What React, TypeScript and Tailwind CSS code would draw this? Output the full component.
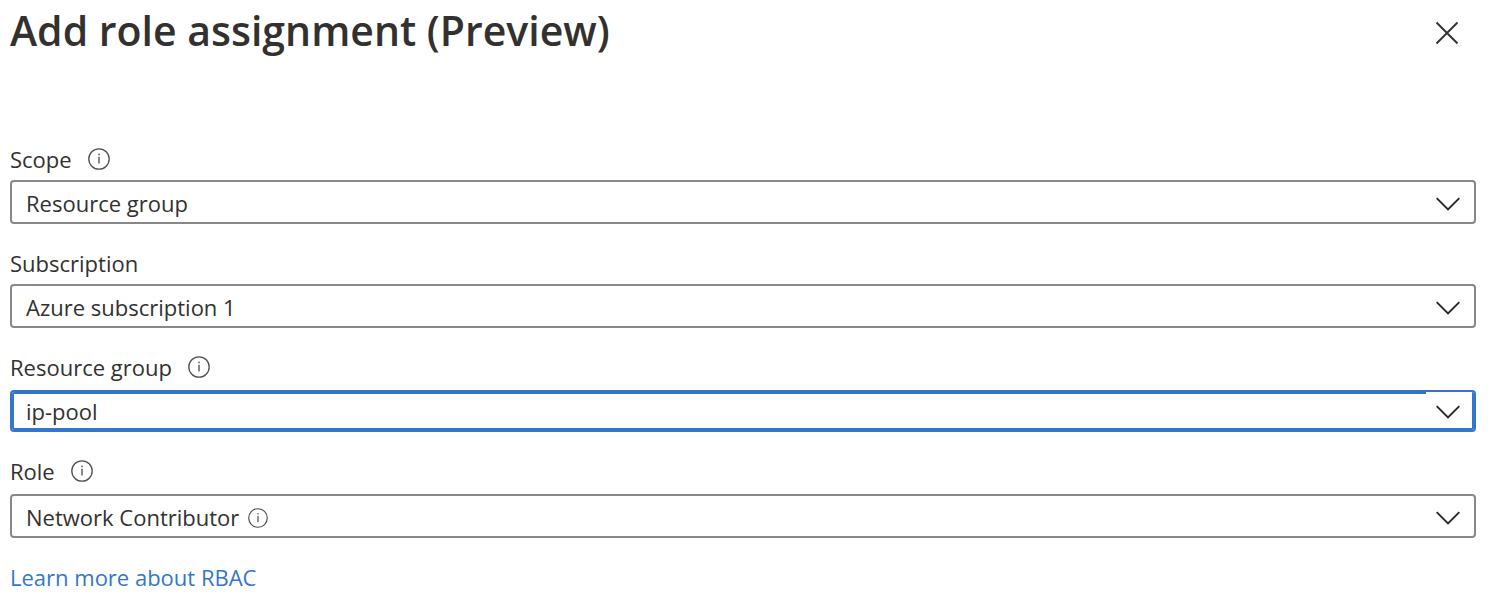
import { useState } from "react";
import type { ReactNode } from "react";
import { clsx } from "clsx";

function InfoIcon({ className }: { className: string }) {
  return (
    <svg viewBox="0 0 22 22" fill="none" className={className} aria-hidden="true">
      <circle cx="11" cy="11" r="10.2" stroke="#505050" strokeWidth="1.3" />
      <circle cx="11" cy="6.4" r="0.9" fill="#606060" />
      <path d="M11 8.8V15.6" stroke="#606060" strokeWidth="1.5" />
    </svg>
  );
}

function ChevronIcon() {
  return (
    <svg viewBox="0 0 24 14" fill="none" className="h-3.5 w-6" aria-hidden="true">
      <path d="M0.7 1.2L12 12.4L23.3 1.2" stroke="#292827" strokeWidth="1.9" />
    </svg>
  );
}

type FieldProps = {
  id: string;
  label: string;
  options: string[];
  info?: boolean;
  active?: boolean;
  spaced?: boolean;
  adornment?: ReactNode;
};

function Field({ id, label, options, info, active, spaced, adornment }: FieldProps) {
  const [value, setValue] = useState(options[0]);
  return (
    <div className={clsx("flex flex-col", spaced && "gap-0.5")}>
      <div className="flex h-8 items-center gap-4 pb-2.5">
        <label htmlFor={id}>{label}</label>
        {info && (
          <button type="button" aria-label={`About ${label}`}>
            <InfoIcon className="size-[22px]" />
          </button>
        )}
      </div>
      <div className="relative">
        <select
          id={id}
          value={value}
          onChange={(e) => setValue(e.target.value)}
          className={clsx(
            "block w-full appearance-none rounded-[4px] border-2 bg-white pr-12 pl-3.5 outline-none",
            active
              ? "h-[42px] border-[#3277cd] shadow-[inset_0_0_0_2px_#3277cd]"
              : "h-11 border-[#8a8886] pt-0.5",
          )}
        >
          {options.map((option) => (
            <option key={option}>{option}</option>
          ))}
        </select>
        {adornment}
        <span
          className={clsx(
            "pointer-events-none absolute top-0.5 right-1 bottom-1 flex w-[46px] items-center justify-center bg-white pr-0.5",
            active ? "pt-1" : "pt-1.5",
          )}
        >
          <ChevronIcon />
        </span>
      </div>
    </div>
  );
}

export default function App() {
  return (
    <main className="bg-white pr-3.5 pl-2.5 font-['Open_Sans','Noto_Sans',sans-serif] text-[22px] leading-8 text-[#323130]">
      <header className="flex h-16 items-start justify-between pr-[17px]">
        <h1 className="text-[41px] leading-[60px] font-semibold">Add role assignment (Preview)</h1>
        <button type="button" aria-label="Close" className="mt-[21px]">
          <svg viewBox="0 0 24 24" fill="none" className="size-6" aria-hidden="true">
            <path d="M1.5 1.5L22.5 22.5M22.5 1.5L1.5 22.5" stroke="#323130" strokeWidth="1.9" />
          </svg>
        </button>
      </header>
      <form className="flex flex-col gap-7 pt-[84px]">
        <Field id="scope" label="Scope" options={["Resource group", "Subscription"]} info />
        <Field id="subscription" label="Subscription" options={["Azure subscription 1"]} />
        <Field id="group" label="Resource group" options={["ip-pool"]} info active spaced />
        <Field
          id="role"
          label="Role"
          options={["Network Contributor"]}
          info
          spaced
          adornment={
            <span className="pointer-events-none absolute inset-y-0 left-[238px] flex items-center pt-1">
              <InfoIcon className="size-5" />
            </span>
          }
        />
      </form>
      <a href="#rbac" className="mt-[23px] inline-block text-[#3277cd]">
        Learn more about RBAC
      </a>
    </main>
  );
}
